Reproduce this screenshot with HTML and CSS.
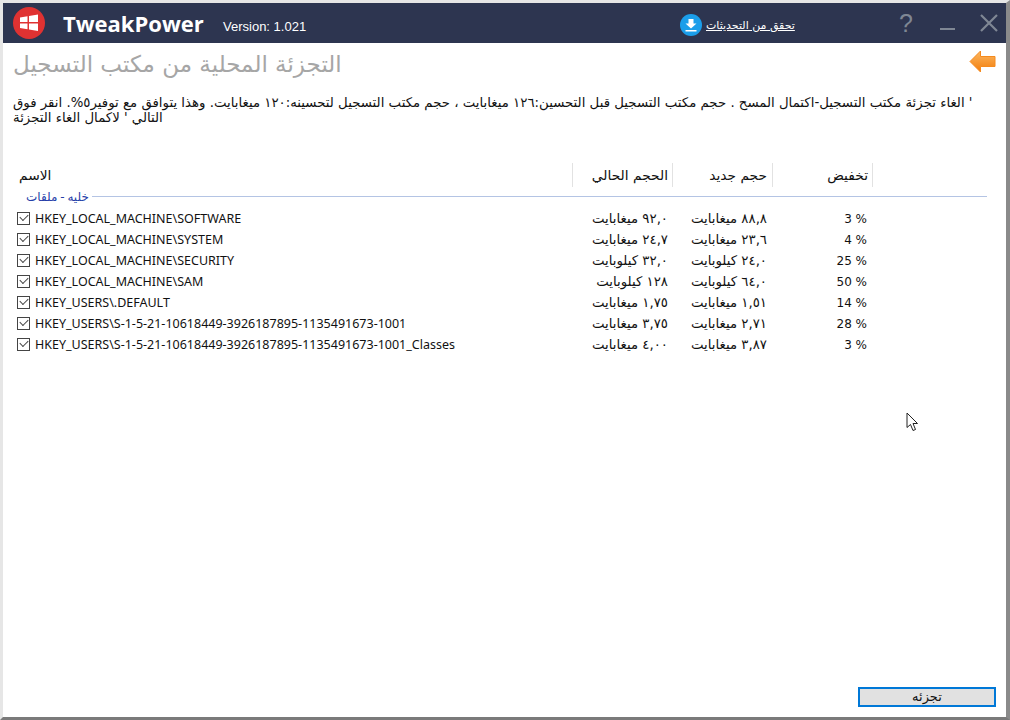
FILE: index.html
```html
<!DOCTYPE html>
<html lang="ar">
<head>
<meta charset="utf-8">
<title>TweakPower</title>
<link rel="stylesheet" href="styles.css">
</head>
<body>
<div class="window">
  <header class="titlebar">
    <svg class="logo" width="32" height="32" viewBox="0 0 32 32">
      <circle cx="16" cy="16" r="16" fill="#e03232"/>
      <path d="M7 10.5 L14.5 9.3 V15 H7Z M16 9 L25 7.6 V15 H16Z M7 16.5 H14.5 V22.2 L7 21Z M16 16.5 H25 V24 L16 22.6Z" fill="#fff"/>
    </svg>
    <span class="brand">TweakPower</span>
    <span class="version">Version: 1.021</span>
    <div class="update">
      <svg width="22" height="22" viewBox="0 0 22 22">
        <circle cx="11" cy="11" r="11" fill="#1b9eea"/>
        <path d="M8.5 5 H13.5 V9.5 H16.5 L11 14.5 L5.5 9.5 H8.5Z M5.5 16 H16.5 V17.5 H5.5Z" fill="#fff"/>
      </svg>
      <a class="update-link" dir="rtl">تحقق من التحديثات</a>
    </div>
    <div class="controls">
      <span class="help">?</span>
      <svg class="min" width="15" height="20" viewBox="0 0 15 20"><rect x="0" y="15" width="15" height="2" fill="#7f8794"/></svg>
      <svg class="close" width="18" height="18" viewBox="0 0 18 18"><path d="M1 1 L17 17 M17 1 L1 17" stroke="#7f8794" stroke-width="2.2" fill="none"/></svg>
    </div>
  </header>
  <main class="content">
    <div class="heading-row">
      <h1 class="heading" dir="rtl">التجزئة المحلية من مكتب التسجيل</h1>
      <svg class="back" width="27" height="23" viewBox="0 0 27 23">
        <defs><linearGradient id="o" x1="0" y1="0" x2="0" y2="1"><stop offset="0" stop-color="#fcb862"/><stop offset="1" stop-color="#f27c0a"/></linearGradient></defs>
        <path d="M1 11.5 L11.5 1 V6.5 H26 V16.5 H11.5 V22Z" fill="url(#o)" stroke="#f58a1e" stroke-width="1" stroke-linejoin="round"/>
      </svg>
    </div>
    <div class="desc">
      <p dir="rtl">' الغاء تجزئة مكتب التسجيل-اكتمال المسح . حجم مكتب التسجيل قبل التحسين:١٢٦ ميغابايت ، حجم مكتب التسجيل لتحسينه:١٢٠ ميغابايت. وهذا يتوافق مع توفير٥%. انقر فوق</p>
      <p dir="rtl">التالي ' لاكمال الغاء التجزئة</p>
    </div>
    <div class="list">
      <div class="row head">
        <span class="name-h" dir="rtl">الاسم</span>
        <span class="hc" dir="rtl">الحجم الحالي</span>
        <span class="hc" dir="rtl">حجم جديد</span>
        <span class="hc" dir="rtl">تخفيض</span>
      </div>
      <div class="group"><span dir="rtl">خليه - ملقات</span><i></i></div>
      <div class="row item"><span class="name"><b class="chk"></b>HKEY_LOCAL_MACHINE\SOFTWARE</span><span class="size" dir="rtl">٩٢,٠ ميغابايت</span><span class="size" dir="rtl">٨٨,٨ ميغابايت</span><span class="pct">3 %</span></div>
      <div class="row item"><span class="name"><b class="chk"></b>HKEY_LOCAL_MACHINE\SYSTEM</span><span class="size" dir="rtl">٢٤,٧ ميغابايت</span><span class="size" dir="rtl">٢٣,٦ ميغابايت</span><span class="pct">4 %</span></div>
      <div class="row item"><span class="name"><b class="chk"></b>HKEY_LOCAL_MACHINE\SECURITY</span><span class="size" dir="rtl">٣٢,٠ كيلوبايت</span><span class="size" dir="rtl">٢٤,٠ كيلوبايت</span><span class="pct">25 %</span></div>
      <div class="row item"><span class="name"><b class="chk"></b>HKEY_LOCAL_MACHINE\SAM</span><span class="size" dir="rtl">١٢٨ كيلوبايت</span><span class="size" dir="rtl">٦٤,٠ كيلوبايت</span><span class="pct">50 %</span></div>
      <div class="row item"><span class="name"><b class="chk"></b>HKEY_USERS\.DEFAULT</span><span class="size" dir="rtl">١,٧٥ ميغابايت</span><span class="size" dir="rtl">١,٥١ ميغابايت</span><span class="pct">14 %</span></div>
      <div class="row item"><span class="name"><b class="chk"></b>HKEY_USERS\S-1-5-21-10618449-3926187895-1135491673-1001</span><span class="size" dir="rtl">٣,٧٥ ميغابايت</span><span class="size" dir="rtl">٢,٧١ ميغابايت</span><span class="pct">28 %</span></div>
      <div class="row item"><span class="name"><b class="chk"></b>HKEY_USERS\S-1-5-21-10618449-3926187895-1135491673-1001_Classes</span><span class="size" dir="rtl">٤,٠٠ ميغابايت</span><span class="size" dir="rtl">٣,٨٧ ميغابايت</span><span class="pct">3 %</span></div>
    </div>
    <div class="footer"><button class="btn" dir="rtl">تجزئه</button></div>
  </main>
  <svg class="cursor" width="14" height="20" viewBox="0 0 14 20">
    <path d="M1 1 V15.5 L4.5 12.5 L7 18.5 L9.5 17.5 L7 11.5 H11.5Z" fill="#fff" stroke="#222" stroke-width="1"/>
  </svg>
</div>
</body>
</html>
```
FILE: styles.css
```css
* { box-sizing: border-box; }
html, body { margin: 0; padding: 0; }
body { font-family: "DejaVu Sans", sans-serif; font-size: 13.3px; color: #111; background: #fff; }
.window {
  position: relative;
  width: 1010px;
  height: 720px;
  display: flex;
  flex-direction: column;
  border-top: 3px solid #e6e6e6;
  border-left: 3px solid #e6e6e6;
  border-right: 4px solid #8a8a8a;
  border-bottom: 3px solid #7a7a7a;
}
.titlebar {
  height: 40px;
  flex: none;
  background: #2d3550;
  display: flex;
  align-items: center;
  color: #fff;
  padding-left: 10px;
}
.logo { flex: none; }
.brand { margin-left: 18px; font-family: "Open Sans", sans-serif; font-weight: 700; font-size: 22px; width: 160px; }
.version { font-family: "Liberation Sans", sans-serif; font-size: 13px; width: 457px; padding-top: 6px; }
.update { display: flex; align-items: center; gap: 4px; width: 219px; padding-top: 4px; }
.update-link { color: #fff; font-size: 11px; text-decoration: underline; }
.controls { display: flex; align-items: center; color: #7f8794; }
.help { font-family: "Liberation Sans", sans-serif; font-size: 25px; line-height: 26px; width: 12px; }
.min { margin-left: 29px; }
.close { margin-left: 25px; }
.content { flex: 1; display: flex; flex-direction: column; padding: 0 0 0 10px; min-height: 0; }
.heading-row { display: flex; justify-content: space-between; align-items: center; height: 42px; padding-right: 10px; }
.heading { margin: 0; font-size: 23px; font-weight: 400; color: #a6a6a6; }
.back { margin-top: -6px; }
.desc { margin-top: 10px; height: 68px; }
.desc p { margin: 0; width: max-content; line-height: 15px; }
.list { display: flex; flex-direction: column; margin-top: 0; flex: 1; }
.row { display: grid; grid-template-columns: 559px 101px 100px 100px; }
.head { height: 24px; align-items: stretch; font-size: 13.8px; }
.name-h { padding-left: 6px; padding-top: 4px; text-align: left; }
.hc { border-right: 1px solid #e2e2e2; padding: 4px 4px 0 0; text-align: right; }
.row .hc:nth-child(2) { border-left: 1px solid #e2e2e2; }
.row .hc:nth-child(3) { padding-right: 5px; }
.group { display: flex; align-items: center; padding: 0 19px 0 13px; margin-top: 1px; height: 17px; font-size: 12px; word-spacing: -1px; color: #2540a8; }
.group i { display: block; margin-left: auto; width: 895px; height: 1px; background: #b4c4e4; }
.item { height: 21px; align-items: center; }
.item:nth-child(3) { margin-top: 3px; }
.name { display: flex; align-items: center; gap: 5px; padding-left: 4px; font-family: "Noto Sans", sans-serif; font-size: 12.5px; white-space: nowrap; color: #111; }
.chk {
  flex: none; width: 13px; height: 13px; border: 1px solid #444; position: relative; background: #fff;
}
.chk::after {
  content: ""; position: absolute; left: 2px; top: 1px; width: 7px; height: 4px;
  border-left: 1.5px solid #444; border-bottom: 1.5px solid #444; transform: rotate(-45deg);
}
.size { text-align: right; padding-right: 5px; }
.size:nth-child(3) { padding-right: 6px; }
.pct { text-align: right; padding-right: 6px; font-size: 12px; font-family: "DejaVu Sans", sans-serif; }
.footer { display: flex; justify-content: flex-end; padding: 0 10px 10px 0; }
.btn {
  width: 138px; height: 20px; background: #e1e1e1; border: 2px solid #0078d7; font-family: "DejaVu Sans", sans-serif; font-size: 13px; line-height: 14px; color: #111; padding: 0;
}
.cursor { position: absolute; left: 903px; top: 409px; }
```
